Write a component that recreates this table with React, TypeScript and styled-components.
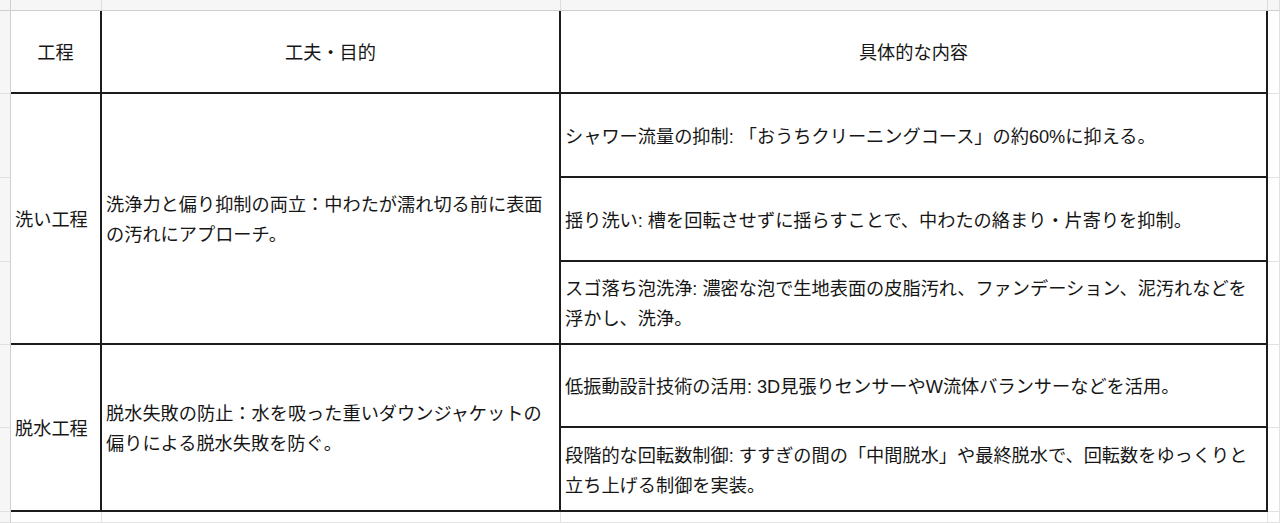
import React from 'react';
import styled, { createGlobalStyle } from 'styled-components';

const GlobalStyle = createGlobalStyle`
  html, body {
    margin: 0;
    padding: 0;
    background: #ffffff;
  }
  body {
    font-family: "Liberation Sans", "Noto Sans CJK JP", sans-serif;
    color: #161616;
  }
`;

const Sheet = styled.div`
  width: 1280px;
  height: 523px;
  overflow: hidden;
  display: grid;
  grid-template-columns: 11px 91px 459px 707px 1fr;
  grid-template-rows: 11px 83px 84px 84px 83px 83px 84px 1fr;
  background: #ffffff;
`;

const Corner = styled.div`
  grid-column: 1;
  grid-row: 1;
  background: #f6f6f6;
  border-right: 1px solid #cfcfcf;
  border-bottom: 1px solid #cfcfcf;
  box-sizing: border-box;
`;

const ColHead = styled.div<{ $col: number }>`
  grid-column: ${p => p.$col};
  grid-row: 1;
  background: #f6f6f6;
  border-right: 1px solid #dcdcdc;
  border-bottom: 1px solid #cfcfcf;
  box-sizing: border-box;
  overflow: hidden;
  display: flex;
  align-items: flex-end;
  justify-content: center;
`;

const ColLetter = styled.span`
  font-size: 12px;
  line-height: 12px;
  color: #888;
  margin-bottom: 8px;
`;

const RowHead = styled.div<{ $row: number }>`
  grid-column: 1;
  grid-row: ${p => p.$row};
  background: #f6f6f6;
  border-right: 1px solid #cfcfcf;
  border-bottom: 1px solid #e0e0e0;
  box-sizing: border-box;
`;

const Cell = styled.div<{ $col: number; $row: number; $span?: number; $center?: boolean; $wide?: boolean }>`
  grid-column: ${p => p.$col};
  grid-row: ${p => p.$row} / span ${p => p.$span ?? 1};
  border-right: 2px solid #1c1c1c;
  border-bottom: 2px solid #1c1c1c;
  box-sizing: border-box;
  display: flex;
  align-items: center;
  justify-content: ${p => (p.$center ? 'center' : 'flex-start')};
  padding: 3px ${p => (p.$wide ? '16px' : '4px')} 0 4px;
  font-size: 18.2px;
  line-height: 30px;
  text-align: ${p => (p.$center ? 'center' : 'left')};
  overflow: hidden;
`;

const Blank = styled.div<{ $col: number; $row: number }>`
  grid-column: ${p => p.$col};
  grid-row: ${p => p.$row};
  border-right: 1px solid #e2e2e2;
  border-bottom: 1px solid #e2e2e2;
  box-sizing: border-box;
`;

type Group = {
  step: string;
  aim: string;
  details: string[];
};

const groups: Group[] = [
  {
    step: '洗い工程',
    aim: '洗浄力と偏り抑制の両立：中わたが濡れ切る前に表面の汚れにアプローチ。',
    details: [
      'シャワー流量の抑制: 「おうちクリーニングコース」の約60%に抑える。',
      '揺り洗い: 槽を回転させずに揺らすことで、中わたの絡まり・片寄りを抑制。',
      'スゴ落ち泡洗浄: 濃密な泡で生地表面の皮脂汚れ、ファンデーション、泥汚れなどを浮かし、洗浄。',
    ],
  },
  {
    step: '脱水工程',
    aim: '脱水失敗の防止：水を吸った重いダウンジャケットの偏りによる脱水失敗を防ぐ。',
    details: [
      '低振動設計技術の活用: 3D見張りセンサーやW流体バランサーなどを活用。',
      '段階的な回転数制御: すすぎの間の「中間脱水」や最終脱水で、回転数をゆっくりと立ち上げる制御を実装。',
    ],
  },
];

const App: React.FC = () => {
  const cells: React.ReactNode[] = [];
  let row = 3;
  groups.forEach((g, gi) => {
    const span = g.details.length;
    cells.push(
      <Cell key={`s${gi}`} $col={2} $row={row} $span={span}>{g.step}</Cell>,
      <Cell key={`a${gi}`} $col={3} $row={row} $span={span}>{g.aim}</Cell>,
    );
    g.details.forEach((d, di) => {
      cells.push(
        <Cell key={`d${gi}-${di}`} $col={4} $row={row + di} $wide>{d}</Cell>,
        <Blank key={`e${gi}-${di}`} $col={5} $row={row + di} />,
      );
    });
    row += span;
  });

  return (
    <>
      <GlobalStyle />
      <Sheet>
        <Corner />
        {['A', 'B', 'C', 'D'].map((l, i) => (
          <ColHead key={l} $col={i + 2}>
            <ColLetter>{l}</ColLetter>
          </ColHead>
        ))}
        {[2, 3, 4, 5, 6, 7, 8].map(r => (
          <RowHead key={r} $row={r} />
        ))}

        <Cell $col={2} $row={2} $center>工程</Cell>
        <Cell $col={3} $row={2} $center>工夫・目的</Cell>
        <Cell $col={4} $row={2} $center>具体的な内容</Cell>
        <Blank $col={5} $row={2} />

        {cells}

        {[2, 3, 4, 5].map(c => (
          <Blank key={`b${c}`} $col={c} $row={8} />
        ))}
      </Sheet>
    </>
  );
};

export default App;
